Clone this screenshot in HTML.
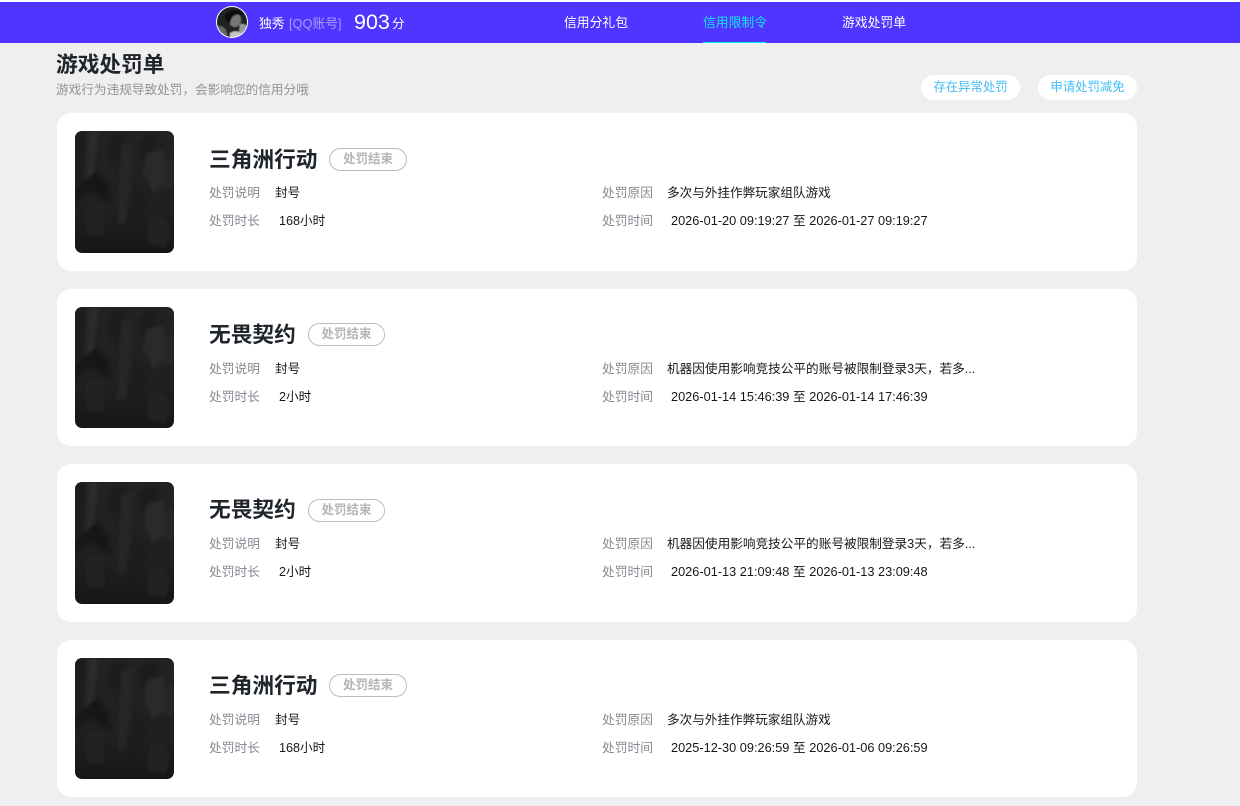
<!DOCTYPE html>
<html lang="zh-CN">
<head>
<meta charset="utf-8">
<title>游戏处罚单</title>
<style>
*{margin:0;padding:0;box-sizing:border-box}
html,body{width:1240px;height:806px;overflow:hidden;background:#efefef;font-family:"Liberation Sans","Noto Sans CJK SC",sans-serif;color:#222}
.abs{position:absolute;white-space:nowrap}
#bar{position:absolute;left:0;top:2px;width:1240px;height:41px;background:#4f35ff}
#topw{position:absolute;left:0;top:0;width:1240px;height:2px;background:#fff}
.card{position:absolute;left:57px;width:1080px;background:#fff;border-radius:14px}
.thumb{position:absolute;left:18px;width:99px;height:122px;border-radius:7px;overflow:hidden}
.thumb svg{display:block}
.name{position:absolute;left:152px;font-size:21.7px;font-weight:700;color:#20252c;line-height:30px;white-space:nowrap}
.tag{position:absolute;height:23px;border:1px solid #bbb;border-radius:12px;color:#b5b5b5;font-size:12.5px;font-weight:700;line-height:20px;text-align:center;white-space:nowrap}
.lb{position:absolute;font-size:12.75px;color:#858a91;line-height:18px;white-space:nowrap}
.v{position:absolute;font-size:12.6px;color:#14181e;line-height:18px;white-space:nowrap}
.d{font-size:12.75px}
.pill{position:absolute;top:75px;width:99px;height:25px;background:#fff;border-radius:13px;color:#45bdf5;font-size:12.4px;line-height:25px;text-align:center;white-space:nowrap}
</style>
</head>
<body>
<div id="topw"></div>
<div id="bar"></div>
<svg class="abs" style="left:216px;top:6px" width="32" height="32" viewBox="0 0 32 32">
<defs><clipPath id="av"><circle cx="16" cy="16" r="15"/></clipPath><filter id="ab"><feGaussianBlur stdDeviation=".6"/></filter></defs>
<circle cx="16" cy="16" r="16" fill="#fff"/>
<g clip-path="url(#av)"><g filter="url(#ab)">
<rect width="32" height="32" fill="#222"/>
<path d="M0 20 Q7 19 10 24 L12 32 L0 32Z" fill="#666"/>
<path d="M24 18 Q30 17 32 22 L32 32 L22 32Z" fill="#999"/>
<ellipse cx="19" cy="14" rx="6" ry="7" fill="#777"/>
<path d="M9 10 Q14 1 26 6 Q27 10 24 9 Q16 7 14 17 Q9 16 9 10Z" fill="#0a0a0a"/>
<path d="M14 27 Q20 23 26 28 L24 32 L14 32Z" fill="#c5c5c5"/>
</g></g>
</svg>
<div class="abs" style="left:259px;top:15px;font-size:12.8px;line-height:18px;color:#fff">独秀</div>
<div class="abs" style="left:289px;top:15px;font-size:12.8px;line-height:18px;color:#a99dfb">[QQ账号]</div>
<div class="abs" style="left:354px;top:8px;font-size:21.5px;line-height:28px;color:#fff">903</div>
<div class="abs" style="left:392px;top:15px;font-size:12.5px;line-height:18px;color:#fff">分</div>
<div class="abs" style="left:564px;top:14px;font-size:12.8px;line-height:18px;color:#fff">信用分礼包</div>
<div class="abs" style="left:703px;top:14px;font-size:12.8px;line-height:18px;color:#13e6ea">信用限制令</div>
<div class="abs" style="left:703px;top:42px;width:63px;height:1px;background:#00f0e8"></div>
<div class="abs" style="left:842px;top:14px;font-size:12.8px;line-height:18px;color:#fff">游戏处罚单</div>

<div class="abs" style="left:56px;top:49px;font-size:21.7px;font-weight:700;line-height:31px;color:#20252c">游戏处罚单</div>
<div class="abs" style="left:56px;top:81px;font-size:12.65px;line-height:18px;color:#8f9499">游戏行为违规导致处罚，会影响您的信用分哦</div>
<div class="pill" style="left:921px">存在异常处罚</div>
<div class="pill" style="left:1038px">申请处罚减免</div>

<svg width="0" height="0" style="position:absolute">
<defs>
<filter id="bl" x="-10%" y="-10%" width="120%" height="120%"><feGaussianBlur stdDeviation="1.6"/></filter>
<linearGradient id="gr" x1="0" y1="0" x2="0" y2="1"><stop offset="0" stop-color="#222"/><stop offset=".65" stop-color="#202020"/><stop offset="1" stop-color="#161616"/></linearGradient>
<g id="art">
<rect width="99" height="122" fill="url(#gr)"/>
<g filter="url(#bl)">
<path d="M14 0 L24 0 L19 42 L10 48Z" fill="#292929"/>
<path d="M0 0 L11 0 L8 45 L0 55Z" fill="#1e1e1e"/>
<path d="M36 8 L48 0 L52 22 L42 40 L34 28Z" fill="#1b1b1b"/>
<path d="M46 14 L58 10 L57 40 L50 92 L42 92 L45 45Z" fill="#262626"/>
<path d="M62 15 L80 0 L84 14 L70 36Z" fill="#1a1a1a"/>
<path d="M72 22 L88 18 L92 50 L78 62 L68 40Z" fill="#292929"/>
<path d="M88 30 L99 26 L99 55 L90 60Z" fill="#262626"/>
<path d="M0 58 L22 40 L32 52 L36 72 L14 60 L0 72Z" fill="#191919"/>
<path d="M10 75 L28 72 L30 105 L12 105Z" fill="#232323"/>
<path d="M60 50 L70 70 L62 105 L54 85Z" fill="#1c1c1c"/>
<path d="M75 85 Q90 80 96 100 L90 116 L72 112Z" fill="#242424"/>
</g>
</g>
</defs>
</svg>

<div class="card" style="top:113px;height:158px">
<div class="thumb" style="top:18px"><svg width="99" height="122"><use href="#art"/></svg></div>
<div class="name" style="top:32px">三角洲行动</div>
<div class="tag" style="left:272px;top:35px;width:78px">处罚结束</div>
<div class="lb" style="left:152px;top:71px">处罚说明</div><div class="v" style="left:218px;top:71px">封号</div>
<div class="lb" style="left:152px;top:99px">处罚时长</div><div class="v" style="left:222px;top:99px">168小时</div>
<div class="lb" style="left:545px;top:71px">处罚原因</div><div class="v" style="left:610px;top:71px">多次与外挂作弊玩家组队游戏</div>
<div class="lb" style="left:545px;top:99px">处罚时间</div><div class="v d" style="left:614px;top:99px">2026-01-20 09:19:27 至 2026-01-27 09:19:27</div>
</div>

<div class="card" style="top:289px;height:157px">
<div class="thumb" style="top:18px;height:121px"><svg width="99" height="122"><use href="#art"/></svg></div>
<div class="name" style="top:31px">无畏契约</div>
<div class="tag" style="left:251px;top:34px;width:77px">处罚结束</div>
<div class="lb" style="left:152px;top:71px">处罚说明</div><div class="v" style="left:218px;top:71px">封号</div>
<div class="lb" style="left:152px;top:99px">处罚时长</div><div class="v" style="left:222px;top:99px">2小时</div>
<div class="lb" style="left:545px;top:71px">处罚原因</div><div class="v" style="left:610px;top:71px;font-size:12.65px">机器因使用影响竞技公平的账号被限制登录3天，若多...</div>
<div class="lb" style="left:545px;top:99px">处罚时间</div><div class="v d" style="left:614px;top:99px">2026-01-14 15:46:39 至 2026-01-14 17:46:39</div>
</div>

<div class="card" style="top:464px;height:158px">
<div class="thumb" style="top:18px"><svg width="99" height="122"><use href="#art"/></svg></div>
<div class="name" style="top:31px">无畏契约</div>
<div class="tag" style="left:251px;top:35px;width:77px">处罚结束</div>
<div class="lb" style="left:152px;top:71px">处罚说明</div><div class="v" style="left:218px;top:71px">封号</div>
<div class="lb" style="left:152px;top:99px">处罚时长</div><div class="v" style="left:222px;top:99px">2小时</div>
<div class="lb" style="left:545px;top:71px">处罚原因</div><div class="v" style="left:610px;top:71px;font-size:12.65px">机器因使用影响竞技公平的账号被限制登录3天，若多...</div>
<div class="lb" style="left:545px;top:99px">处罚时间</div><div class="v d" style="left:614px;top:99px">2026-01-13 21:09:48 至 2026-01-13 23:09:48</div>
</div>

<div class="card" style="top:640px;height:157px">
<div class="thumb" style="top:18px;height:121px"><svg width="99" height="122"><use href="#art"/></svg></div>
<div class="name" style="top:31px">三角洲行动</div>
<div class="tag" style="left:272px;top:34px;width:78px">处罚结束</div>
<div class="lb" style="left:152px;top:71px">处罚说明</div><div class="v" style="left:218px;top:71px">封号</div>
<div class="lb" style="left:152px;top:99px">处罚时长</div><div class="v" style="left:222px;top:99px">168小时</div>
<div class="lb" style="left:545px;top:71px">处罚原因</div><div class="v" style="left:610px;top:71px">多次与外挂作弊玩家组队游戏</div>
<div class="lb" style="left:545px;top:99px">处罚时间</div><div class="v d" style="left:614px;top:99px">2025-12-30 09:26:59 至 2026-01-06 09:26:59</div>
</div>
</body>
</html>
